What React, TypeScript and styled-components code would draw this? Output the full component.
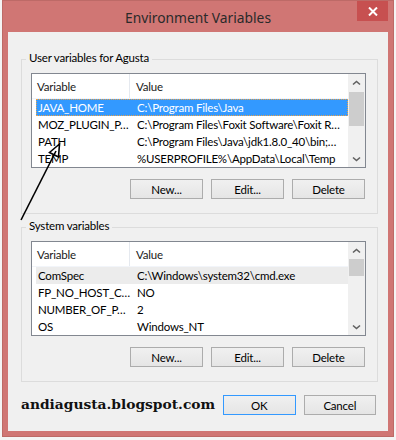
import * as React from 'react';
import styled, { createGlobalStyle } from 'styled-components';

const GlobalStyle = createGlobalStyle`
  html, body {
    margin: 0;
    padding: 0;
    background: #f4f4f4;
  }
  body {
    font-family: Lato, 'Noto Sans', sans-serif;
    font-size: 11.5px;
    letter-spacing: -0.2px;
    color: #000;
  }
`;

type EnvVar = { name: string; value: string };

const userVars: EnvVar[] = [
  { name: 'JAVA_HOME', value: 'C:\\Program Files\\Java' },
  { name: 'MOZ_PLUGIN_P…', value: 'C:\\Program Files\\Foxit Software\\Foxit R…' },
  { name: 'PATH', value: 'C:\\Program Files\\Java\\jdk1.8.0_40\\bin;…' },
  { name: 'TEMP', value: '%USERPROFILE%\\AppData\\Local\\Temp' },
];

const systemVars: EnvVar[] = [
  { name: 'ComSpec', value: 'C:\\Windows\\system32\\cmd.exe' },
  { name: 'FP_NO_HOST_C…', value: 'NO' },
  { name: 'NUMBER_OF_P…', value: '2' },
  { name: 'OS', value: 'Windows_NT' },
];

const Page = styled.div`
  position: relative;
  width: 396px;
  height: 440px;
  overflow: hidden;
`;

const Window = styled.div`
  margin-left: 2px;
  width: 392px;
  height: 437px;
  box-sizing: border-box;
  border: 1px solid #bd6a67;
  background: #d07674;
  display: flex;
  flex-direction: column;
  padding: 0 5px 5px;
`;

const TitleBar = styled.div`
  height: 31px;
  display: grid;
  grid-template-columns: 1fr auto 1fr;
  align-items: start;
`;

const Title = styled.div`
  grid-column: 2;
  align-self: center;
  font-family: 'Noto Sans', sans-serif;
  font-size: 13.8px;
  letter-spacing: 0;
  color: #2a2a2a;
  margin-top: 1px;
`;

const CloseButton = styled.div`
  grid-column: 3;
  justify-self: end;
  width: 31px;
  height: 20px;
  background: #c75050;
  display: flex;
  align-items: center;
  justify-content: center;
`;

const Client = styled.div`
  flex: 1;
  background: #f0f0f0;
  display: flex;
  flex-direction: column;
  padding-top: 27px;
`;

const GroupBox = styled.div<{ $gapTop?: number }>`
  margin: ${p => p.$gapTop ?? 0}px 10px 0 13px;
  border: 1px solid #dcdcdc;
  padding: 0 11px 14px 9px;
  display: flex;
  flex-direction: column;
`;

const Legend = styled.div`
  margin: -10px 0 0 -5px;
  padding: 0 3px;
  line-height: 16px;
  background: #f0f0f0;
  align-self: flex-start;
`;

const ListBox = styled.div`
  margin-top: 7px;
  height: 95px;
  box-sizing: border-box;
  border: 1px solid #828790;
  background: #fff;
  display: flex;
`;

const Columns = styled.div`
  flex: 1;
  display: flex;
  flex-direction: column;
  min-width: 0;
`;

const HeaderRow = styled.div`
  height: 25px;
  display: grid;
  grid-template-columns: 98px 1fr;
  border-bottom: 1px solid #f2f5fa;
  box-sizing: border-box;
`;

const HeaderCell = styled.div<{ $first?: boolean }>`
  display: flex;
  align-items: center;
  padding-left: ${p => (p.$first ? 5 : 6)}px;
  border-right: ${p => (p.$first ? '1px solid #e5e9ef' : 'none')};
  color: #1a1a1a;
`;

const Row = styled.div<{ $state?: 'selected' | 'inactive' }>`
  height: 17px;
  margin-left: 4px;
  box-sizing: border-box;
  display: grid;
  grid-template-columns: 94px 1fr;
  align-items: center;
  white-space: nowrap;
  background: ${p =>
    p.$state === 'selected' ? '#3399ff' : p.$state === 'inactive' ? '#ececec' : 'transparent'};
  color: ${p => (p.$state === 'selected' ? '#fff' : '#000')};
  border: 1px ${p => (p.$state === 'selected' ? 'dotted #e8a24a' : 'solid transparent')};
`;

const NameCell = styled.span`
  padding-left: 1px;
  overflow: hidden;
`;

const ValueCell = styled.span`
  padding-left: 6px;
  overflow: hidden;
`;

const ScrollBar = styled.div`
  width: 17px;
  background: #f0f0f0;
  display: flex;
  flex-direction: column;
`;

const ArrowButton = styled.div`
  height: 17px;
  display: flex;
  align-items: center;
  justify-content: center;
`;

const Track = styled.div`
  flex: 1;
  display: flex;
  flex-direction: column;
`;

const Thumb = styled.div<{ $top: number; $size: number }>`
  margin: ${p => p.$top}px 1px 0;
  height: ${p => p.$size}px;
  background: #cdcdcd;
`;

const ButtonRow = styled.div`
  display: flex;
  justify-content: flex-end;
  gap: 8px;
  margin: 11px 1px 0 0;
`;

const Button = styled.button<{ $default?: boolean }>`
  width: 73px;
  height: 20px;
  box-sizing: border-box;
  padding: 0;
  font: inherit;
  letter-spacing: inherit;
  color: #000;
  border: 1px solid ${p => (p.$default ? '#3399ff' : '#acacac')};
  background: linear-gradient(#f0f0f0, #e5e5e5);
  display: flex;
  align-items: center;
  justify-content: center;
`;

const Footer = styled.div`
  display: flex;
  align-items: center;
  gap: 8px;
  margin: 13px 12px 0 13px;
`;

const Watermark = styled.div`
  flex: 1;
  font-family: 'DejaVu Serif', 'Liberation Serif', serif;
  font-weight: bold;
  font-size: 13.8px;
  letter-spacing: 0;
  color: #111;
  margin-top: -2px;
`;

const ArrowOverlay = styled.svg`
  position: absolute;
  left: 0;
  top: 0;
  pointer-events: none;
`;

const Chevron: React.FC<{ down?: boolean }> = ({ down }) => (
  <svg width="9" height="6" viewBox="0 0 9 6">
    <path
      d={down ? 'M1 1.5 L4.5 4.5 L8 1.5' : 'M1 4.5 L4.5 1.5 L8 4.5'}
      fill="none"
      stroke="#606060"
      strokeWidth="1.6"
    />
  </svg>
);

type VarListProps = {
  rows: EnvVar[];
  selected: number;
  inactive?: boolean;
  thumbTop: number;
  thumbSize: number;
};

const VarList: React.FC<VarListProps> = ({ rows, selected, inactive, thumbTop, thumbSize }) => (
  <ListBox>
    <Columns>
      <HeaderRow>
        <HeaderCell $first>Variable</HeaderCell>
        <HeaderCell>Value</HeaderCell>
      </HeaderRow>
      {rows.map((r, i) => (
        <Row key={r.name} $state={i === selected ? (inactive ? 'inactive' : 'selected') : undefined}>
          <NameCell>{r.name}</NameCell>
          <ValueCell>{r.value}</ValueCell>
        </Row>
      ))}
    </Columns>
    <ScrollBar>
      <ArrowButton>
        <Chevron />
      </ArrowButton>
      <Track>
        <Thumb $top={thumbTop} $size={thumbSize} />
      </Track>
      <ArrowButton>
        <Chevron down />
      </ArrowButton>
    </ScrollBar>
  </ListBox>
);

const EditButtons: React.FC = () => (
  <ButtonRow>
    <Button>New...</Button>
    <Button>Edit...</Button>
    <Button>Delete</Button>
  </ButtonRow>
);

const App: React.FC = () => {
  return (
    <Page>
      <GlobalStyle />
      <Window>
        <TitleBar>
          <Title>Environment Variables</Title>
          <CloseButton>
            <svg width="10" height="9" viewBox="0 0 10 9">
              <path d="M1 0.5 L9 8.5 M9 0.5 L1 8.5" stroke="#fff" strokeWidth="2" />
            </svg>
          </CloseButton>
        </TitleBar>
        <Client>
          <GroupBox>
            <Legend>User variables for Agusta</Legend>
            <VarList rows={userVars} selected={0} thumbTop={1} thumbSize={34} />
            <EditButtons />
          </GroupBox>
          <GroupBox $gapTop={13}>
            <Legend>System variables</Legend>
            <VarList rows={systemVars} selected={0} inactive thumbTop={0} thumbSize={17} />
            <EditButtons />
          </GroupBox>
          <Footer>
            <Watermark>andiagusta.blogspot.com</Watermark>
            <Button $default>OK</Button>
            <Button>Cancel</Button>
          </Footer>
        </Client>
      </Window>
      <ArrowOverlay width="396" height="440" viewBox="0 0 396 440">
        <line x1="21" y1="220" x2="56" y2="151" stroke="#000" strokeWidth="1.6" />
        <path d="M59.5 144 L49.5 152.5 L58.5 157 Z" fill="none" stroke="#000" strokeWidth="1.6" strokeLinejoin="miter" />
      </ArrowOverlay>
    </Page>
  );
};

export default App;
